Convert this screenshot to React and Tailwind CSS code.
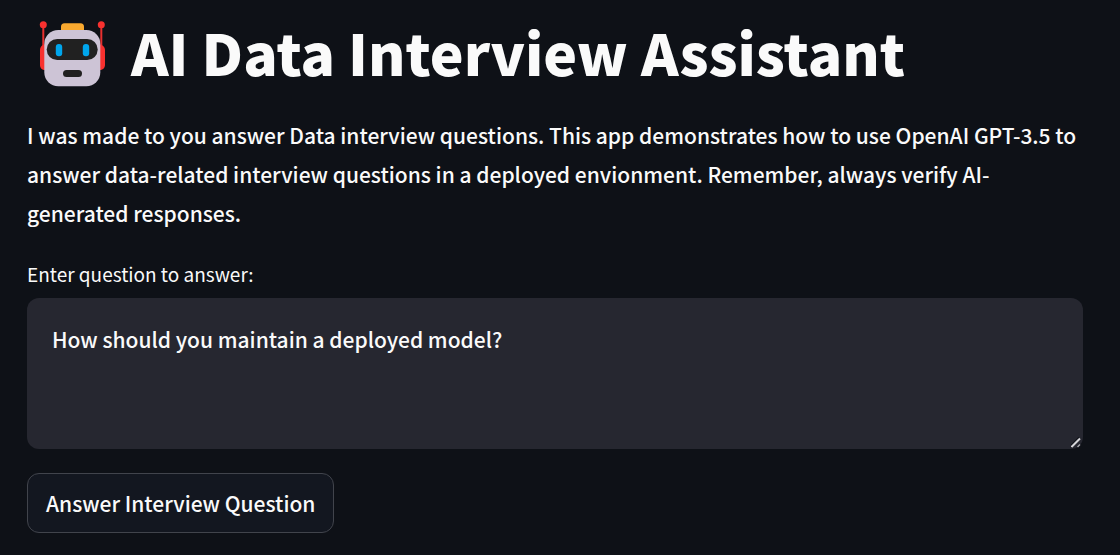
function RobotIcon() {
  return (
    <svg viewBox="0 0 90 90" className="size-[90px] shrink-0" aria-hidden="true">
      <g transform="translate(3 2)">
        <rect x="12.3" y="14" width="2" height="26" fill="#e8302f" />
        <rect x="70.3" y="14" width="2" height="26" fill="#e8302f" />
        <circle cx="13.3" cy="14.7" r="3.5" fill="#f8312f" />
        <circle cx="71.3" cy="14.7" r="3.5" fill="#f8312f" />
        <path d="M15 34.5c-3 0-5 2.5-5 5.500V55c0 3 2 5 5 5Z" fill="#f8312f" />
        <path d="M69.500 34.500c3 0 5.500 2.500 5.500 5.500V55c0 3-2.500 5-5.500 5Z" fill="#f8312f" />
        <path d="M34.500 13.300h16a3.500 3.500 0 0 1 3.500 3.500V21H31v-4.200a3.500 3.500 0 0 1 3.500-3.500Z" fill="#f9a92f" />
        <rect x="14.300" y="20" width="56" height="56.300" rx="14" fill="#cdc4d6" />
        <rect x="16.700" y="29" width="51" height="21" rx="10.500" fill="#212121" />
        <rect x="25.800" y="34" width="6.400" height="12.300" rx="3" fill="#00a6ed" />
        <rect x="52.800" y="34" width="6.400" height="12.300" rx="3" fill="#00a6ed" />
        <rect x="33" y="60" width="19" height="7" rx="3.500" fill="#212121" />
      </g>
    </svg>
  );
}

function ResizeGrip() {
  return (
    <svg viewBox="0 0 12 12" className="pointer-events-none absolute right-0 bottom-0 size-3" aria-hidden="true">
      <path d="M0 8.500 8 0.500" stroke="#0e1117" strokeWidth="1.500" />
      <path d="M0.500 10 9 1.500" stroke="#d6d6da" strokeWidth="2" />
      <path d="M6.500 10 9 7.500" stroke="#a8a8ae" strokeWidth="1.500" />
    </svg>
  );
}

export default function App() {
  return (
    <main className="flex min-h-screen flex-col items-stretch bg-[#0e1117] pt-2 pr-[37px] pb-5 pl-[27px] font-['Noto_Sans_CJK_SC',sans-serif] text-[21px] font-medium text-[#fafafa]">
      <h1 className="flex items-start gap-[14px] text-[57px] leading-[87px] font-black">
        <RobotIcon />
        <span>AI Data Interview Assistant</span>
      </h1>
      <p className="mt-[18px] leading-[39px]">
        I was made to you answer Data interview questions. This app demonstrates how to use OpenAI
        GPT-3.5 to answer data-related interview questions in a deployed envionment. Remember,
        always verify AI-generated responses.
      </p>
      <label htmlFor="question" className="mt-[27px] text-[19px] leading-7 font-normal">
        Enter question to answer:
      </label>
      <div className="relative mt-[10px]">
        <textarea
          id="question"
          className="block h-[151px] w-full resize-none rounded-xl bg-[#262730] px-[25px] py-6 leading-[34px] outline-none"
          defaultValue="How should you maintain a deployed model?"
        />
        <ResizeGrip />
      </div>
      <button
        type="button"
        className="mt-6 self-start rounded-xl border border-[#41444c] bg-[#131720] px-[18px] py-3 leading-[34px]"
      >
        Answer Interview Question
      </button>
    </main>
  );
}
